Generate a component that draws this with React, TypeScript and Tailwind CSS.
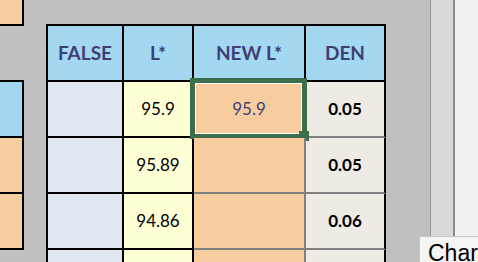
const rows = [
  { l: '95.9', n: '95.9', d: '0.05' },
  { l: '95.89', n: '', d: '0.05' },
  { l: '94.86', n: '', d: '0.06' },
  { l: '', n: '', d: '' },
];

function HeaderCell({ label }: { label: string }) {
  return (
    <div className="h-[56px] flex items-center justify-center bg-[#a3d8f0] border-r-2 border-b-2 border-black text-[19px] font-bold text-[#3f3f76]">
      {label}
    </div>
  );
}

export default function App() {
  return (
    <div
      className="relative w-[478px] h-[262px] overflow-hidden flex bg-[#c0c0c0]"
      style={{ fontFamily: 'Lato, "Open Sans", sans-serif' }}
    >
      {/* left column of the sheet */}
      <div className="w-[24px] flex flex-col shrink-0">
        <div className="h-[26px] bg-[#f7cd9f] border-r-2 border-b-2 border-black" />
        <div className="h-[54px]" />
        <div className="h-[58px] bg-[#a3d8f0] border-t-2 border-r-2 border-b-2 border-black" />
        <div className="h-[56px] bg-[#f7cd9f] border-r-2 border-b-2 border-black" />
        <div className="h-[56px] bg-[#f7cd9f] border-r-2 border-b-2 border-black" />
      </div>

      {/* table */}
      <div className="ml-[22px] mt-[24px] w-[340px] shrink-0 border-l-2 border-t-2 border-black self-start grid grid-cols-[76px_70px_112px_80px]">
        <HeaderCell label="FALSE" />
        <HeaderCell label="L*" />
        <HeaderCell label="NEW L*" />
        <HeaderCell label="DEN" />
        {rows.map((r, i) => (
          <div key={i} className="contents">
            <div className="h-[56px] bg-[#dfe6ef] border-r-2 border-b-2 border-black" />
            <div className="h-[56px] flex items-center justify-center bg-[#ffffd6] border-r-2 border-b-2 border-black text-[17px] text-black">
              {r.l}
            </div>
            <div className="relative h-[56px] flex items-center justify-center bg-[#f7cd9f] border-r-2 border-b-2 border-[#808080] text-[17px] text-[#3f3f76]">
              {r.n}
              {i === 0 && (
                <div className="absolute left-[-4px] top-[-4px] w-[117px] h-[61px] border-[5px] border-[#3b6f4b] shadow-[inset_0_0_0_1px_white] pointer-events-none">
                  <div className="absolute left-[104px] top-[48px] w-[10px] h-[10px] bg-[#3b6f4b]" />
                </div>
              )}
            </div>
            <div className="h-[56px] flex items-center justify-center bg-[#eeebe4] border-r-2 border-r-black border-b-2 border-b-[#808080] text-[17px] font-bold text-black">
              {r.d}
            </div>
          </div>
        ))}
      </div>

      <div className="w-[44px] shrink-0" />

      {/* side strip */}
      <div className="w-[25px] shrink-0 bg-[#d9d9d9] border-l border-[#9a9a9a] border-r-2 border-r-[#8c8c8c]" />
      <div className="flex-1 bg-[#f1f1f1]" />

      {/* tooltip */}
      <div className="absolute left-[419px] top-[236px] w-[80px] h-[40px] bg-[#f4f4f4] border border-[#c8c8c8] pl-[8px] pt-[5px] text-[23px] text-black leading-[23px] whitespace-nowrap"
        style={{ fontFamily: '"Liberation Sans", Arial, sans-serif' }}
      >
        Chart
      </div>
    </div>
  );
}
